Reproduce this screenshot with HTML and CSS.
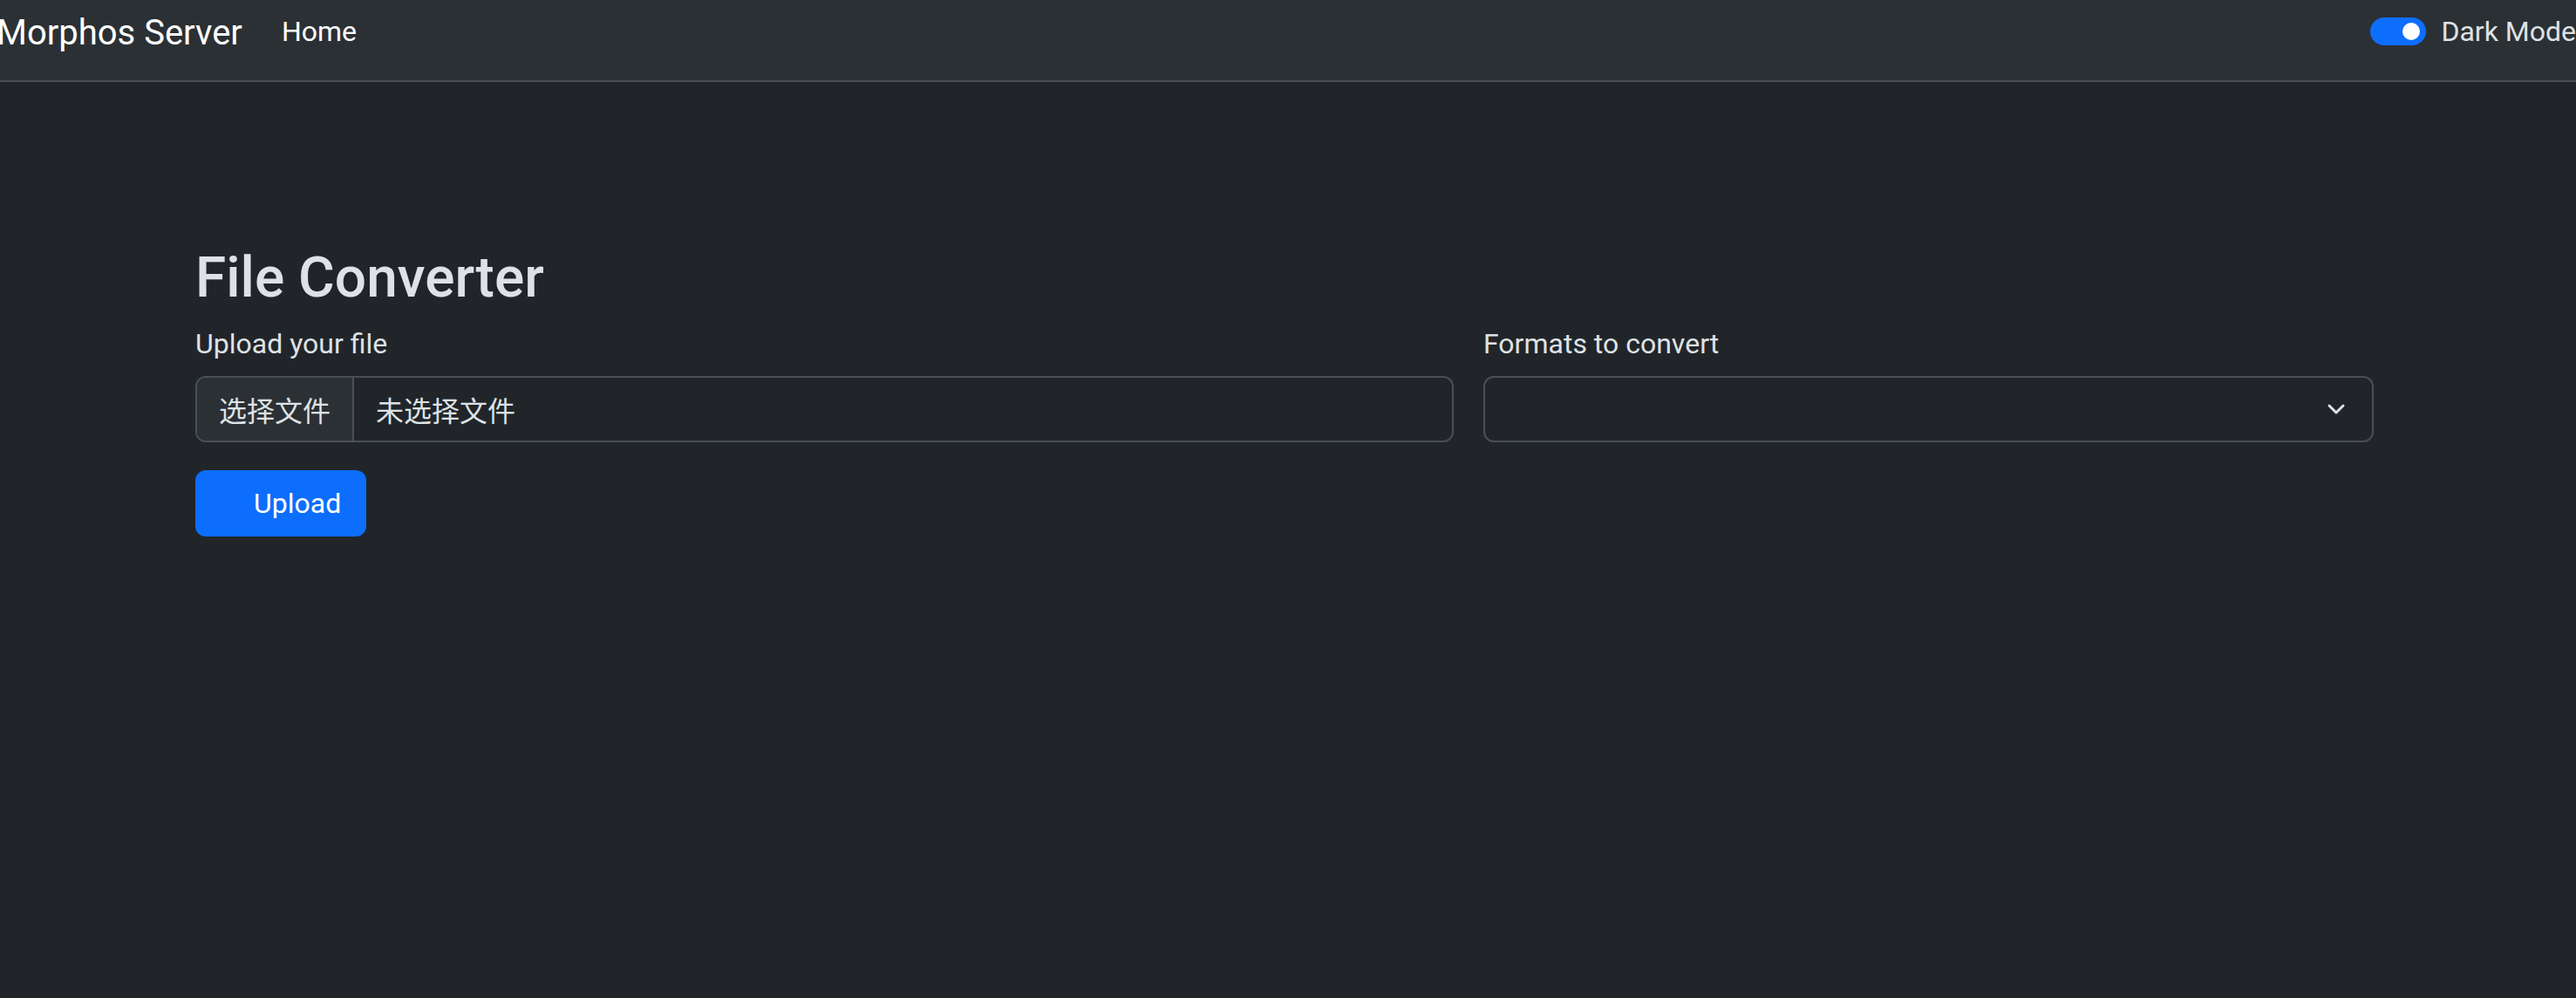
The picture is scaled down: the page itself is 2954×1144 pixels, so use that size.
FILE: index.html
```html
<!DOCTYPE html>
<html lang="en">
<head>
    <meta charset="UTF-8">
    <meta name="viewport" content="width=device-width, initial-scale=1.0">
    <title>Morphos Server</title>
    <link rel="stylesheet" href="styles.css">
</head>
<body>

<nav class="navbar">
    <div class="nav-inner">
        <div class="nav-left">
            <a class="brand" href="#">Morphos Server</a>
            <a class="nav-link" href="#">Home</a>
        </div>
        <label class="switch">
            <span class="switch-track"><span class="switch-knob"></span></span>
            <span class="switch-label">Dark Mode</span>
        </label>
    </div>
</nav>

<div class="container">
    <h2>File Converter</h2>
    <form class="converter">
        <div class="row">
            <div class="field">
                <label class="form-label">Upload your file</label>
                <div class="file-input">
                    <span class="file-btn">选择文件</span>
                    <span class="file-name">未选择文件</span>
                </div>
            </div>
            <div class="field">
                <label class="form-label">Formats to convert</label>
                <div class="select">
                    <svg class="chevron" width="22" height="14" viewBox="0 0 22 14">
                        <path d="M3 3l8 8 8-8" fill="none" stroke="#dee2e6" stroke-width="3" stroke-linecap="round" stroke-linejoin="round"/>
                    </svg>
                </div>
            </div>
        </div>
        <button type="button" class="btn-upload">Upload</button>
    </form>
</div>

</body>
</html>
```

FILE: styles.css
```css
body {
    margin: 0;
    background: #212529;
    color: #dee2e6;
    font-family: Roboto, "Noto Sans CJK SC", sans-serif;
    font-size: 32px;
    overflow: hidden;
}
.navbar {
    height: 92px;
    background: #2b3035;
    border-bottom: 2px solid #4a4f55;
}
.nav-inner {
    height: 72px;
    display: flex;
    align-items: center;
    justify-content: space-between;
    margin: 0 0 0 -4px;
}
.nav-left {
    display: flex;
    align-items: center;
    gap: 45px;
}
.brand {
    font-size: 40px;
    color: #fff;
    text-decoration: none;
    padding-top: 2px;
}
.nav-link {
    color: #fff;
    text-decoration: none;
}
.switch {
    display: flex;
    align-items: center;
    gap: 17px;
}
.switch-track {
    width: 64px;
    height: 32px;
    border-radius: 16px;
    background: #0d6efd;
    display: flex;
    align-items: center;
    justify-content: flex-end;
    padding: 0 7px;
    box-sizing: border-box;
}
.switch-knob {
    width: 20px;
    height: 20px;
    border-radius: 50%;
    background: #fff;
}
.switch-label {
    color: #dee2e6;
}
.container {
    padding: 0 0 0 224px;
    width: 2498px;
}
h2 {
    font-size: 64px;
    font-weight: 500;
    line-height: 1.2;
    margin: 187px 0 17px;
}
.row {
    display: grid;
    grid-template-columns: 1443px 1021px;
    gap: 34px;
}
.form-label {
    display: block;
    margin-bottom: 18px;
}
.file-input {
    display: flex;
    height: 76px;
    box-sizing: border-box;
    border: 2px solid #495057;
    border-radius: 12px;
    overflow: hidden;
}
.file-btn {
    background: #2b3035;
    border-right: 2px solid #495057;
    padding: 0 25px;
    display: flex;
    align-items: center;
}
.file-name {
    display: flex;
    align-items: center;
    padding-left: 25px;
}
.select {
    height: 76px;
    box-sizing: border-box;
    border: 2px solid #495057;
    border-radius: 12px;
    display: flex;
    align-items: center;
    justify-content: flex-end;
    padding-right: 30px;
}
.btn-upload {
    margin-top: 32px;
    width: 196px;
    height: 76px;
    border: none;
    border-radius: 12px;
    background: #0d6efd;
    color: #fff;
    font: inherit;
    padding: 0 24px 0 67px;
    text-align: left;
}
```
